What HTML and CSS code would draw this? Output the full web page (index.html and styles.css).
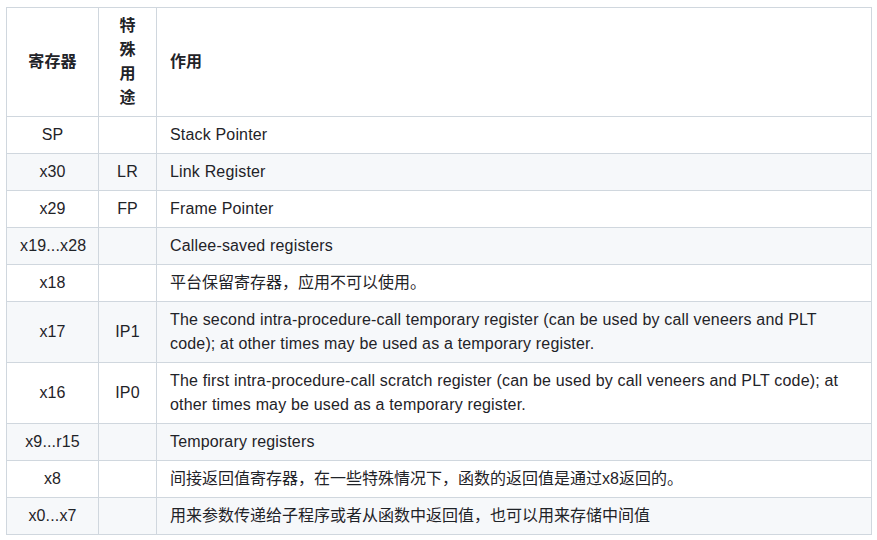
FILE: index.html
```html
<!DOCTYPE html>
<html lang="zh">
<head>
<meta charset="utf-8">
<link rel="stylesheet" href="styles.css">
</head>
<body>
<table class="regs">
  <colgroup>
    <col class="c-reg">
    <col class="c-use">
    <col class="c-desc">
  </colgroup>
  <thead>
    <tr>
      <th class="center">寄存器</th>
      <th class="center">特殊用途</th>
      <th class="left">作用</th>
    </tr>
  </thead>
  <tbody>
    <tr><td class="center">SP</td><td class="center"></td><td class="en">Stack Pointer</td></tr>
    <tr><td class="center">x30</td><td class="center">LR</td><td class="en">Link Register</td></tr>
    <tr><td class="center">x29</td><td class="center">FP</td><td class="en">Frame Pointer</td></tr>
    <tr><td class="center">x19...x28</td><td class="center"></td><td class="en">Callee-saved registers</td></tr>
    <tr><td class="center">x18</td><td class="center"></td><td>平台保留寄存器，应用不可以使用。</td></tr>
    <tr><td class="center">x17</td><td class="center">IP1</td><td class="en">The second intra-procedure-call temporary register (can be used by call veneers and PLT code); at other times may be used as a temporary register.</td></tr>
    <tr><td class="center">x16</td><td class="center">IP0</td><td class="en">The first intra-procedure-call scratch register (can be used by call veneers and PLT code); at other times may be used as a temporary register.</td></tr>
    <tr><td class="center">x9...r15</td><td class="center"></td><td class="en">Temporary registers</td></tr>
    <tr><td class="center">x8</td><td class="center"></td><td>间接返回值寄存器，在一些特殊情况下，函数的返回值是通过x8返回的。</td></tr>
    <tr><td class="center">x0...x7</td><td class="center"></td><td>用来参数传递给子程序或者从函数中返回值，也可以用来存储中间值</td></tr>
  </tbody>
</table>
</body>
</html>
```

FILE: styles.css
```css
html, body {
  margin: 0;
  padding: 0;
  background: #ffffff;
}

body {
  padding: 7px 0 0 6px;
  font-family: "Liberation Sans", "Noto Sans CJK SC", sans-serif;
  font-size: 16px;
  line-height: 24px;
  color: #1f2328;
}

.regs {
  border-collapse: collapse;
  border-spacing: 0;
  table-layout: fixed;
  width: 865px;
}

.c-reg { width: 92px; }
.c-use { width: 58px; }
.c-desc { width: 715px; }

.regs th,
.regs td {
  border: 1px solid #d0d7de;
  padding: 6px 13px;
  vertical-align: middle;
  text-align: left;
}

.regs th {
  font-weight: 600;
}

.regs .center {
  text-align: center;
  letter-spacing: 0.15px;
}

.regs .en {
  letter-spacing: 0.17px;
}

.regs tbody tr {
  background: #ffffff;
}

.regs tbody tr:nth-child(2n) {
  background: #f6f8fa;
}
```
